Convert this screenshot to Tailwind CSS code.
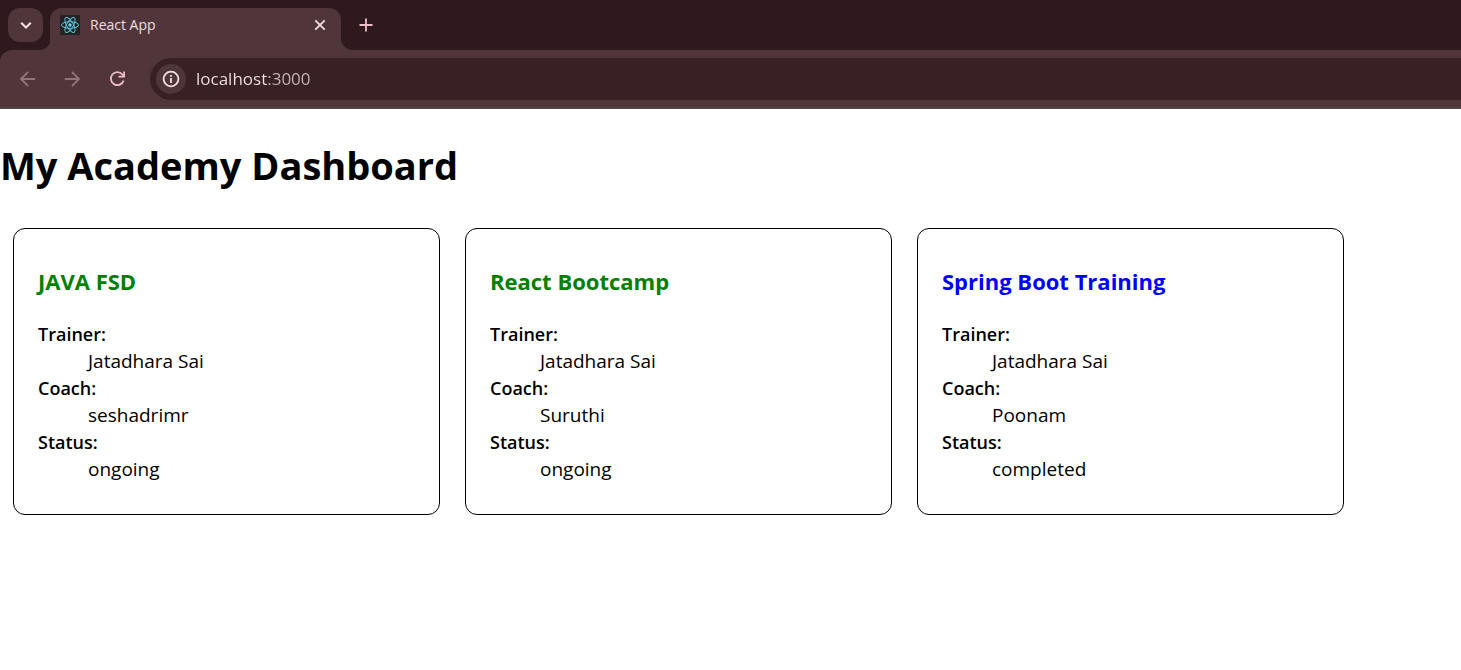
<!DOCTYPE html>
<html lang="en">
<head>
<meta charset="utf-8">
<meta name="viewport" content="width=device-width, initial-scale=1">
<title>React App</title>
<script src="https://cdn.jsdelivr.net/npm/@tailwindcss/browser@4"></script>
</head>
<body class="min-h-screen bg-white text-black font-['Open_Sans','Noto_Sans',sans-serif]">
<header class="bg-[#30191e]">
  <div class="flex h-[50px] items-end pl-2">
    <button aria-label="Search tabs" class="mb-2 flex h-[34px] w-[35px] shrink-0 items-center justify-center rounded-xl bg-[#50353a] text-[#f5dfe3]">
      <svg class="size-4" viewBox="0 0 16 16" fill="none" stroke="currentColor" stroke-width="2"><path d="M3.200 5.700 8 10.500l4.800-4.800"/></svg>
    </button>
    <svg class="-ml-1 h-3 w-3 shrink-0 text-[#50353a]" viewBox="0 0 12 12" fill="currentColor" aria-hidden="true"><path d="M12 0v12H0A12 12 0 0 0 12 0z"/></svg>
    <div class="-ml-px flex h-[42px] w-[291px] shrink-0 items-center rounded-t-xl bg-[#50353a] pb-2 pl-[10px] pr-3">
      <svg class="size-5 shrink-0" viewBox="0 0 20 20" fill="none" stroke="#58c4dc" stroke-width="1" aria-hidden="true">
        <rect width="20" height="20" rx="1" fill="#232323" stroke="none"/>
        <ellipse cx="10" cy="10" rx="8.500" ry="3.300"/>
        <ellipse cx="10" cy="10" rx="8.500" ry="3.300" transform="rotate(60 10 10)"/>
        <ellipse cx="10" cy="10" rx="8.500" ry="3.300" transform="rotate(120 10 10)"/>
        <circle cx="10" cy="10" r="1.700" fill="#61dafb" stroke="none"/>
      </svg>
      <span class="ml-[10px] flex-1 text-[14px] leading-5 text-[#f0dde0]">React App</span>
      <button aria-label="Close tab" class="flex size-[18px] items-center justify-center text-[#f5dfe3]">
        <svg class="size-4" viewBox="0 0 16 16" fill="none" stroke="currentColor" stroke-width="1.800"><path d="m3.300 3.300 9.400 9.400M12.700 3.300l-9.400 9.400"/></svg>
      </button>
    </div>
    <svg class="h-3 w-3 shrink-0 text-[#50353a]" viewBox="0 0 12 12" fill="currentColor" aria-hidden="true"><path d="M0 0v12h12A12 12 0 0 1 0 0z"/></svg>
    <button aria-label="New tab" class="mb-4 ml-1 flex size-[18px] items-center justify-center text-[#eebfc8]">
      <svg class="size-4 shrink-0" viewBox="0 0 16 16" fill="none" stroke="currentColor" stroke-width="1.800"><path d="M8 1.500v13M1.500 8h13"/></svg>
    </button>
  </div>
  <div class="flex h-[59px] items-center rounded-tl-xl border-b-2 border-[#524549] bg-[#50353a] pl-[18px]">
    <button aria-label="Back" class="size-5 text-[#8f757b]">
      <svg viewBox="0 0 20 20" fill="none" stroke="currentColor" stroke-width="1.800"><path d="M17.200 10H3.500M10 3 3 10l7 7"/></svg>
    </button>
    <button aria-label="Forward" class="ml-6 size-5 text-[#8f757b]">
      <svg viewBox="0 0 20 20" fill="none" stroke="currentColor" stroke-width="1.800"><path d="M2.800 10h13.700M10 3l7 7-7 7"/></svg>
    </button>
    <button aria-label="Reload" class="ml-[26px] size-5 text-[#eebfc8]">
      <svg viewBox="0 0 20 20" fill="none" stroke="currentColor" stroke-width="1.800"><path d="M15.600 11.500A6.500 6.500 0 1 1 14.400 5.500L16 7.300"/><path d="M16.100 2.500V7.600H10.500"/></svg>
    </button>
    <div class="ml-[22px] flex h-[42px] flex-1 items-center rounded-l-full bg-[#382025] pl-[6px]">
      <button aria-label="Site information" class="flex size-[30px] shrink-0 items-center justify-center rounded-full bg-[#50353a] text-[#f5dfe3]">
        <svg class="size-[18px]" viewBox="0 0 18 18" fill="none" stroke="currentColor" stroke-width="1.800"><circle cx="9" cy="9" r="7.400"/><path d="M9 8v5M9 5v1.800"/></svg>
      </button>
      <input aria-label="Address" value="localhost:3000" class="ml-[10px] min-w-0 flex-1 bg-[linear-gradient(to_right,#f5e3e6_72px,#cbb6ba_72px)] bg-clip-text text-[17px] leading-6 text-transparent caret-white outline-none">
    </div>
  </div>
</header>
<main>
  <h1 class="pt-[29px] text-[38px] font-bold leading-[54px]">My Academy Dashboard</h1>
  <div class="mx-[13px] mt-9 flex flex-wrap gap-[25px]">
    <section class="w-[427px] rounded-xl border border-black px-6 pt-9 pb-[31px]">
      <h3 class="text-[22px] font-bold leading-8 text-[#008000]">JAVA FSD</h3>
      <dl class="mt-6 text-[19px] leading-[27px]">
        <dt class="text-[18px] font-semibold leading-[27px]">Trainer:</dt><dd class="ml-[50px]">Jatadhara Sai</dd>
        <dt class="text-[18px] font-semibold leading-[27px]">Coach:</dt><dd class="ml-[50px]">seshadrimr</dd>
        <dt class="text-[18px] font-semibold leading-[27px]">Status:</dt><dd class="ml-[50px]">ongoing</dd>
      </dl>
    </section>
    <section class="w-[427px] rounded-xl border border-black px-6 pt-9 pb-[31px]">
      <h3 class="text-[22px] font-bold leading-8 text-[#008000]">React Bootcamp</h3>
      <dl class="mt-6 text-[19px] leading-[27px]">
        <dt class="text-[18px] font-semibold leading-[27px]">Trainer:</dt><dd class="ml-[50px]">Jatadhara Sai</dd>
        <dt class="text-[18px] font-semibold leading-[27px]">Coach:</dt><dd class="ml-[50px]">Suruthi</dd>
        <dt class="text-[18px] font-semibold leading-[27px]">Status:</dt><dd class="ml-[50px]">ongoing</dd>
      </dl>
    </section>
    <section class="w-[427px] rounded-xl border border-black px-6 pt-9 pb-[31px]">
      <h3 class="text-[22px] font-bold leading-8 text-[#0000ff]">Spring Boot Training</h3>
      <dl class="mt-6 text-[19px] leading-[27px]">
        <dt class="text-[18px] font-semibold leading-[27px]">Trainer:</dt><dd class="ml-[50px]">Jatadhara Sai</dd>
        <dt class="text-[18px] font-semibold leading-[27px]">Coach:</dt><dd class="ml-[50px]">Poonam</dd>
        <dt class="text-[18px] font-semibold leading-[27px]">Status:</dt><dd class="ml-[50px]">completed</dd>
      </dl>
    </section>
  </div>
</main>
</body>
</html>
